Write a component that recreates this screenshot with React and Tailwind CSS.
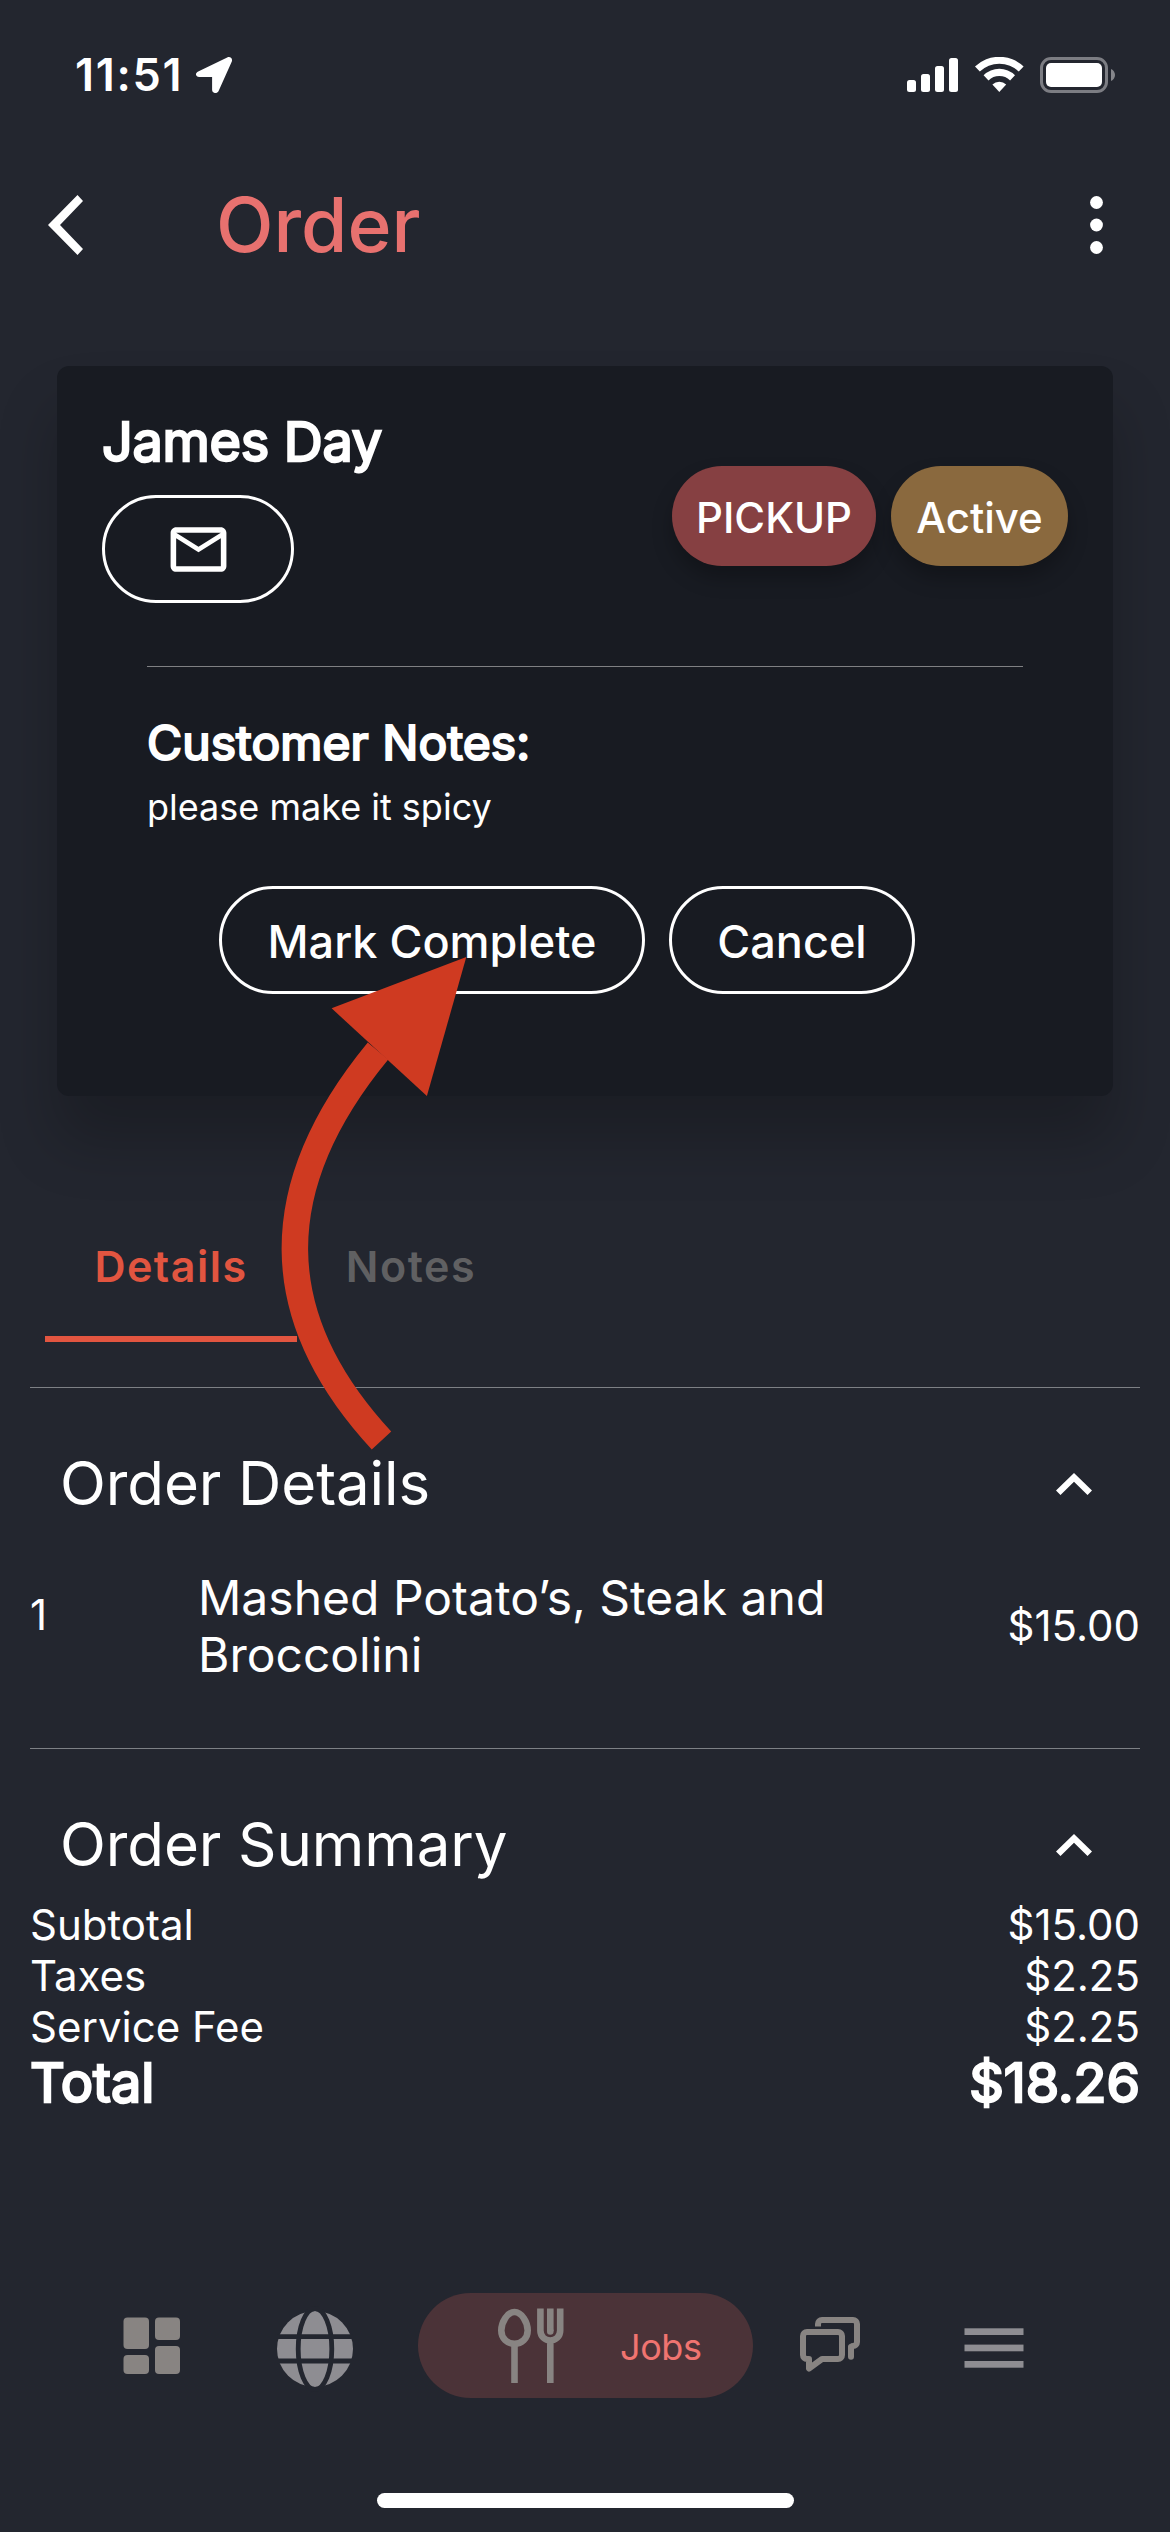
import React, { useState } from 'react'
import { MdMailOutline } from 'react-icons/md'

const tabs = [
  { key: 'details', label: 'Details', className: 'w-[252px] tracking-[1.5px]' },
  { key: 'notes', label: 'Notes', className: 'w-[228px] tracking-[1.6px]' },
]

const summary = [
  { label: 'Subtotal', value: '$15.00' },
  { label: 'Taxes', value: '$2.25' },
  { label: 'Service Fee', value: '$2.25' },
]

function StatusBar() {
  return (
    <div className="flex h-[149px] items-center justify-between pl-[75px] pr-[55px]">
      <div className="flex items-center">
        <span className="w-[111px] text-[45px] font-semibold leading-none tracking-[1.7px]">11:51</span>
        <svg className="ml-[10px] h-9 w-9" viewBox="0 0 36 36" fill="white">
          <path d="M2.2 14.4 31.2 0.5c3-1.4 5.8 1 4.5 4.3L22.6 34c-1.4 3.2-6.5 2.6-6.5-1.2V20H3.2C-.6 20-1.2 16 2.2 14.4Z" />
        </svg>
      </div>
      <svg className="h-9 w-[208px]" viewBox="0 0 208 36" fill="white">
        <rect x="0" y="23" width="9" height="12" rx="2.5" />
        <rect x="14" y="17" width="9" height="18" rx="2.5" />
        <rect x="28" y="9" width="9" height="26" rx="2.5" />
        <rect x="42" y="1" width="9" height="34" rx="2.5" />
        <path d="M68 9.6a35 35 0 0 1 48.6 0l-4.8 5a28 28 0 0 0-39 0Z" />
        <path d="M76.6 18.2a22.500 22.500 0 0 1 31.400 0l-4.900 5.200a15.400 15.400 0 0 0-21.600 0Z" />
        <path d="M85.400 27.400a10 10 0 0 1 13.800 0l-6.900 7.600Z" />
        <rect x="134.500" y="1.500" width="65" height="33" rx="9.500" fill="none" stroke="#7c7d83" strokeWidth="3" />
        <rect x="139" y="6" width="56" height="24" rx="5" />
        <path d="M204 12v12c2.600-1.200 4-3.400 4-6s-1.400-4.800-4-6Z" fill="#85868b" />
      </svg>
    </div>
  )
}

function Header() {
  return (
    <header className="flex h-[152px] items-center pl-12 pr-[67px]">
      <svg className="h-[60px] w-[35px]" viewBox="0 0 35 60" fill="white">
        <path d="M29.500 0 35 6 12 30 35 54 29.500 60 0 30Z" />
      </svg>
      <h1 className="mb-[2px] ml-[133px] text-[75px] font-medium leading-none text-[#e8716f]">Order</h1>
      <svg className="ml-auto h-[58px] w-[13px]" viewBox="0 0 13 58" fill="white">
        <circle cx="6.500" cy="6.500" r="6.400" />
        <circle cx="6.500" cy="29" r="6.400" />
        <circle cx="6.500" cy="51.500" r="6.400" />
      </svg>
    </header>
  )
}

function OrderCard() {
  return (
    <section className="mx-[57px] mt-[65px] h-[730px] rounded-xl bg-[#181b22] px-[45px] pt-[47px] shadow-[0_45px_60px_rgba(0,0,0,0.22)]">
      <div className="flex items-end justify-between">
        <div>
          <h2 className="text-[54px] leading-[58px] tracking-[-0.3px] [-webkit-text-stroke:2.4px_white]">James Day</h2>
          <button className="mt-6 flex h-[108px] w-48 items-center justify-center rounded-full border-3 border-white">
            <MdMailOutline className="size-[67px]" />
          </button>
        </div>
        <div className="mb-[37px] flex gap-[15px] text-[42px] font-medium leading-none">
          <span className="flex h-[100px] w-[204px] items-center justify-center rounded-full bg-[#864042] pt-[3px] shadow-[0_12px_20px_rgba(0,0,0,0.25)]">
            PICKUP
          </span>
          <span className="flex h-[100px] w-[177px] items-center justify-center rounded-full bg-[#8a693e] pt-[3px] shadow-[0_12px_20px_rgba(0,0,0,0.25)]">
            Active
          </span>
        </div>
      </div>

      <div className="mx-[45px] mt-[63px] border-t border-[#7f8083]">
        <h3 className="mt-[50px] text-[48px] leading-[52px] tracking-[0.1px] [-webkit-text-stroke:2.2px_white]">Customer Notes:</h3>
        <p className="mt-[17px] text-[36px] leading-[42px]">please make it spicy</p>
      </div>

      <div className="mt-[58px] flex gap-6 pl-[117px] text-[45px] font-medium leading-none">
        <button className="h-[108px] w-[426px] rounded-full border-3 border-white pt-[3px]">Mark Complete</button>
        <button className="h-[108px] w-[246px] rounded-full border-3 border-white pt-[3px]">Cancel</button>
      </div>
    </section>
  )
}

function Section({ title, children }) {
  return (
    <section className="mx-[30px] border-t border-[#7d8085]">
      <div className="flex h-[191px] items-center justify-between pl-[30px] pr-12">
        <h2 className="pb-px text-[60px] leading-none tracking-[-0.1px]">{title}</h2>
        <svg className="h-[22px] w-9" viewBox="0 0 36 22" fill="white">
          <path d="M18 0 36 17.500 31.500 22 18 8.800 4.500 22 0 17.500Z" />
        </svg>
      </div>
      {children}
    </section>
  )
}

function BottomNav() {
  return (
    <nav className="mt-[180px] flex h-[105px] pl-[123px]">
      <svg className="h-[105px] w-[57px]" viewBox="0 0 57 105" fill="#888482">
        <rect x="0.500" y="24.500" width="25.500" height="31.500" rx="4" />
        <rect x="32" y="24.500" width="25" height="22.500" rx="4" />
        <rect x="0.500" y="62" width="25.500" height="19" rx="4" />
        <rect x="32" y="53" width="25" height="28" rx="4" />
      </svg>

      <svg className="ml-[97px] h-[105px] w-[76px]" viewBox="0 0 76 105">
        <circle cx="38" cy="56" r="38" fill="#8e8d92" />
        <g fill="none" stroke="#23262f" strokeWidth="4.800">
          <ellipse cx="38" cy="56" rx="16.800" ry="40.400" />
          <path d="M0 43.700h76M0 68h76" />
        </g>
      </svg>

      <button className="ml-[65px] flex h-[105px] w-[335px] rounded-full bg-[#4b3338]">
        <svg className="ml-20 h-[105px] w-[66px]" viewBox="0 0 66 105" fill="none" stroke="#888482" strokeWidth="6.600">
          <path d="M16.500 19C9.500 19 3.300 29 3.300 37.500c0 8 6 13.200 13.200 13.200s13.200-5.200 13.200-13.200C29.700 29 23.500 19 16.500 19Z" />
          <path d="M16.500 50v40" />
          <path d="M42.400 15.500v22c0 6 4.600 10 9.900 10s9.900-4 9.900-10v-22M52.300 47v43" />
          <path d="M52.300 15.500v22.500" />
          <circle cx="52.300" cy="38.400" r="3.300" fill="#888482" stroke="none" />
        </svg>
        <span className="ml-[56px] mt-[32px] text-[36px] leading-[44px] tracking-[-0.4px] text-[#f07470]">Jobs</span>
      </button>

      <svg className="ml-[47px] h-[105px] w-[60px]" viewBox="0 0 60 105" fill="none" stroke="#888482" strokeWidth="6">
        <path d="M9 75V66H7a4 4 0 0 1-4-4V43a4 4 0 0 1 4-4h31a4 4 0 0 1 4 4v19a4 4 0 0 1-4 4H22L9 75.500Z" strokeLinejoin="round" />
        <path d="M18 33.500V31a4 4 0 0 1 4-4h31a4 4 0 0 1 4 4v18a4 4 0 0 1-4 4a2 2 0 0 0-2 2" />
        <path d="M51 54v9.700" strokeLinecap="round" />
      </svg>

      <svg className="ml-[104px] h-[105px] w-[60px]" viewBox="0 0 60 105" fill="#8e8d92">
        <rect x="0.500" y="35.300" width="59" height="6.700" />
        <rect x="0.500" y="51.600" width="59" height="6.700" />
        <rect x="0.500" y="68" width="59" height="6.700" />
      </svg>
    </nav>
  )
}

// curved pointer laid over the card, aimed at "Mark Complete"
function Pointer() {
  return (
    <svg className="pointer-events-none absolute left-[270px] top-[950px] h-[510px] w-[210px]" viewBox="270 950 210 510">
      <path d="M381.500 1440.500Q210 1255 378 1051" fill="none" stroke="#cf3a21" strokeWidth="26.500" />
      <path d="M466.300 957 331.600 1008.300 426.900 1096Z" fill="#cf3a21" />
    </svg>
  )
}

export default function App() {
  const [activeTab, setActiveTab] = useState('details')

  return (
    <div className="relative h-[2532px] w-[1170px] overflow-hidden bg-[#23262f] font-[Inter,sans-serif] text-white">
      <StatusBar />
      <Header />
      <OrderCard />

      <div className="mb-[45px] ml-[45px] mt-[96px] flex h-[150px]">
        {tabs.map((tab) => (
          <button
            key={tab.key}
            onClick={() => setActiveTab(tab.key)}
            className={`border-b-6 pt-[5px] text-[43px] font-semibold leading-none ${tab.className} ${
              activeTab === tab.key ? 'border-[#e25540] text-[#e25540]' : 'border-transparent text-[#606062]'
            }`}
          >
            {tab.label}
          </button>
        ))}
      </div>

      <Section title="Order Details">
        <div className="-mt-[10px] flex h-[179px] text-[42px] leading-[56px]">
          <span className="w-[168px] pt-[18px]">1</span>
          <p className="w-[680px] text-[48px] leading-[57px]">Mashed Potato’s, Steak and Broccolini</p>
          <span className="ml-auto pt-[29px]">$15.00</span>
        </div>
      </Section>

      <Section title="Order Summary">
        <dl className="-mt-[41px] text-[42px] leading-[51px]">
          {summary.map((row) => (
            <div key={row.label} className="flex justify-between">
              <dt>{row.label}</dt>
              <dd>{row.value}</dd>
            </div>
          ))}
          <div className="flex justify-between text-[54px] leading-[61px] [-webkit-text-stroke:2.4px_white]">
            <dt>Total</dt>
            <dd>$18.26</dd>
          </div>
        </dl>
      </Section>

      <BottomNav />
      <div className="mx-auto mt-[95px] h-[15px] w-[417px] rounded-full bg-white" />

      <Pointer />
    </div>
  )
}
